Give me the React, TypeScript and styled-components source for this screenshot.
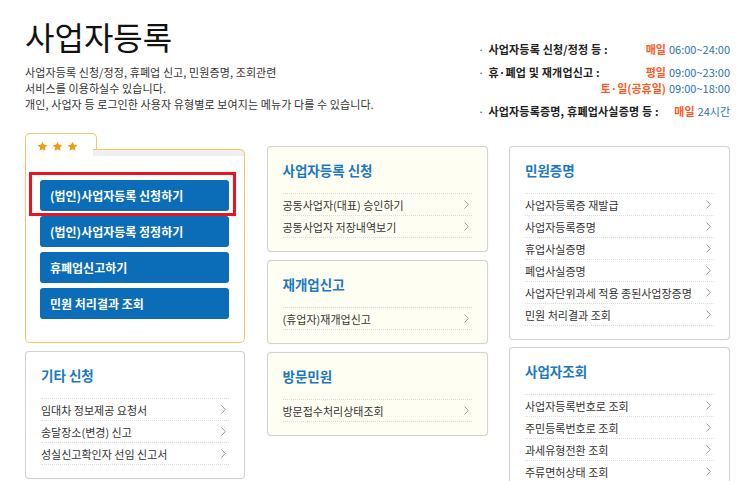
import React from "react";
import styled, { createGlobalStyle } from "styled-components";

const COLORS = {
  TEXT: "#333333",
  BLUE: "#1a78c2",
  BUTTON: "#0b6db7",
  ORANGE: "#f5c46e",
  STAR: "#f39a0f",
  RED: "#ff5a1f",
  TIME: "#2a72b0",
  IVORY: "#fffef2",
  LINE: "#d2d2d2",
};

const GlobalStyle = createGlobalStyle`
  * { box-sizing: border-box; }
  body {
    margin: 0;
    background: #ffffff;
    font-family: "Noto Sans CJK KR", "Noto Sans", sans-serif;
    color: ${COLORS.TEXT};
  }
`;

const Page = styled.div`
  width: 743px;
  height: 481px;
  overflow: hidden;
  padding: 15px 13px 0 25px;
`;

const Top = styled.div`
  display: flex;
  justify-content: space-between;
  height: 118px;
`;

const TitleBlock = styled.div``;

const Title = styled.h1`
  margin: 0;
  font-size: 32px;
  font-weight: 400;
  line-height: 42px;
  color: #111;
`;

const Desc = styled.p`
  margin: 7px 0 0 0;
  font-size: 11px;
  line-height: 16px;
  letter-spacing: 0.1px;
`;

const Info = styled.div`
  display: flex;
  flex-direction: column;
  gap: 7px;
  width: 252px;
  margin-top: 26px;
  font-size: 11px;
  line-height: 16px;
  white-space: nowrap;
  align-self: flex-start;
`;

const InfoRow = styled.div`
  display: flex;
  justify-content: space-between;
`;

const InfoLabel = styled.div`
  color: #222;
  font-weight: 700;
  letter-spacing: 0.2px;
  &::before {
    content: "·";
    font-weight: 400;
    color: #555;
    margin-right: 4px;
  }
`;

const InfoTime = styled.div`
  text-align: right;
  color: ${COLORS.TIME};
  span {
    color: ${COLORS.RED};
    font-weight: 700;
    margin-right: 3px;
  }
`;

const Grid = styled.div`
  display: grid;
  grid-template-columns: 220px 221px 221px;
  column-gap: 21.5px;
  align-items: start;
`;

const Column = styled.div<{ $gap: number; $top: number }>`
  display: flex;
  flex-direction: column;
  gap: ${(p) => p.$gap}px;
  padding-top: ${(p) => p.$top}px;
`;

const Favorite = styled.div`
  position: relative;
`;

const FolderHead = styled.div`
  display: flex;
  align-items: flex-start;
`;

const Tab = styled.div`
  width: 72px;
  height: 23px;
  border: 1px solid ${COLORS.ORANGE};
  border-bottom: none;
  border-radius: 5px 5px 0 0;
  background: #fff;
  display: flex;
  gap: 4px;
  padding: 7px 0 0 11px;
`;

const TabRest = styled.div`
  flex: 1;
  margin-top: 16px;
  height: 7px;
  border-top: 1px solid ${COLORS.ORANGE};
  border-right: 1px solid ${COLORS.ORANGE};
  border-radius: 0 5px 0 0;
  background: #efefef;
  margin-left: -4px;
`;

const FolderBody = styled.div`
  border: 1px solid ${COLORS.ORANGE};
  border-top: none;
  border-radius: 0 0 5px 5px;
  padding: 24px 15px 23px 14px;
  display: flex;
  flex-direction: column;
  gap: 5px;
`;

const BlueButton = styled.button`
  height: 31px;
  border: none;
  border-radius: 3px;
  background: ${COLORS.BUTTON};
  color: #fff;
  font-family: inherit;
  font-size: 12px;
  font-weight: 700;
  text-align: left;
  padding: 0 0 0 10px;
  cursor: pointer;
`;

const Highlight = styled.div`
  position: absolute;
  left: 4px;
  top: 39px;
  width: 207px;
  height: 44px;
  border: 3px solid #e8141f;
  pointer-events: none;
`;

const Card = styled.div<{ $ivory?: boolean }>`
  background: ${(p) => (p.$ivory ? COLORS.IVORY : "#fff")};
  border: 1px solid ${COLORS.LINE};
  border-radius: 4px;
  box-shadow: 0 0 1px rgba(0, 0, 0, 0.15);
  padding: 14px 15px 13px 15px;
`;

const CardTitle = styled.h3`
  margin: 0 0 14px 0;
  font-size: 13.5px;
  line-height: 18px;
  font-weight: 700;
  color: ${COLORS.BLUE};
`;

const List = styled.ul`
  margin: 0;
  padding: 0;
  list-style: none;
  border-top: 1px dotted #dcdcdc;
`;

const Item = styled.li`
  height: 22px;
  border-bottom: 1px dotted #dcdcdc;
  display: flex;
  align-items: center;
  justify-content: space-between;
  font-size: 11px;
  color: ${COLORS.TEXT};
  padding-right: 3px;
`;

const Star = () => (
  <svg width="11" height="11" viewBox="0 0 24 24">
    <path
      d="M12 1.5l3.2 6.9 7.3.8-5.4 5 1.5 7.3L12 17.8l-6.6 3.7 1.5-7.3-5.4-5 7.3-.8z"
      fill={COLORS.STAR}
    />
  </svg>
);

const Chevron = () => (
  <svg width="5" height="9" viewBox="0 0 5 9">
    <polyline points="0.5,0.5 4.3,4.5 0.5,8.5" fill="none" stroke="#9a9a9a" strokeWidth="1" />
  </svg>
);

type CardData = { title: string; items: string[]; ivory?: boolean };

const MenuCard = ({ title, items, ivory }: CardData) => (
  <Card $ivory={ivory}>
    <CardTitle>{title}</CardTitle>
    <List>
      {items.map((item) => (
        <Item key={item}>
          {item}
          <Chevron />
        </Item>
      ))}
    </List>
  </Card>
);

const favoriteList = [
  "(법인)사업자등록 신청하기",
  "(법인)사업자등록 정정하기",
  "휴폐업신고하기",
  "민원 처리결과 조회",
];

const middleCards: CardData[] = [
  { title: "사업자등록 신청", items: ["공동사업자(대표) 승인하기", "공동사업자 저장내역보기"], ivory: true },
  { title: "재개업신고", items: ["(휴업자)재개업신고"], ivory: true },
  { title: "방문민원", items: ["방문접수처리상태조회"], ivory: true },
];

const rightCards: CardData[] = [
  {
    title: "민원증명",
    items: [
      "사업자등록증 재발급",
      "사업자등록증명",
      "휴업사실증명",
      "폐업사실증명",
      "사업자단위과세 적용 종된사업장증명",
      "민원 처리결과 조회",
    ],
  },
  {
    title: "사업자조회",
    items: ["사업자등록번호로 조회", "주민등록번호로 조회", "과세유형전환 조회", "주류면허상태 조회"],
  },
];

export default function App() {
  return (
    <>
      <GlobalStyle />
      <Page>
        <Top>
          <TitleBlock>
            <Title>사업자등록</Title>
            <Desc>
              사업자등록 신청/정정, 휴폐업 신고, 민원증명, 조회관련
              <br />
              서비스를 이용하실수 있습니다.
              <br />
              개인, 사업자 등 로그인한 사용자 유형별로 보여지는 메뉴가 다를 수 있습니다.
            </Desc>
          </TitleBlock>
          <Info>
            <InfoRow>
              <InfoLabel>사업자등록 신청/정정 등 :</InfoLabel>
              <InfoTime>
                <span>매일</span>06:00~24:00
              </InfoTime>
            </InfoRow>
            <InfoRow>
              <InfoLabel>휴·폐업 및 재개업신고 :</InfoLabel>
              <InfoTime>
                <span>평일</span>09:00~23:00
                <br />
                <span>토·일(공휴일)</span>09:00~18:00
              </InfoTime>
            </InfoRow>
            <InfoRow>
              <InfoLabel>사업자등록증명, 휴폐업사실증명 등 :</InfoLabel>
              <InfoTime>
                <span>매일</span>24시간
              </InfoTime>
            </InfoRow>
          </Info>
        </Top>
        <Grid>
          <Column $gap={8} $top={0}>
            <Favorite>
              <FolderHead>
                <Tab>
                  <Star />
                  <Star />
                  <Star />
                </Tab>
                <TabRest />
              </FolderHead>
              <FolderBody>
                {favoriteList.map((menu) => (
                  <BlueButton key={menu} type="button">
                    {menu}
                  </BlueButton>
                ))}
              </FolderBody>
              <Highlight />
            </Favorite>
            <MenuCard
              title="기타 신청"
              items={["임대차 정보제공 요청서", "송달장소(변경) 신고", "성실신고확인자 선임 신고서"]}
            />
          </Column>
          <Column $gap={8} $top={13}>
            {middleCards.map((card) => (
              <MenuCard key={card.title} {...card} />
            ))}
          </Column>
          <Column $gap={7} $top={13}>
            {rightCards.map((card) => (
              <MenuCard key={card.title} {...card} />
            ))}
          </Column>
        </Grid>
      </Page>
    </>
  );
}
